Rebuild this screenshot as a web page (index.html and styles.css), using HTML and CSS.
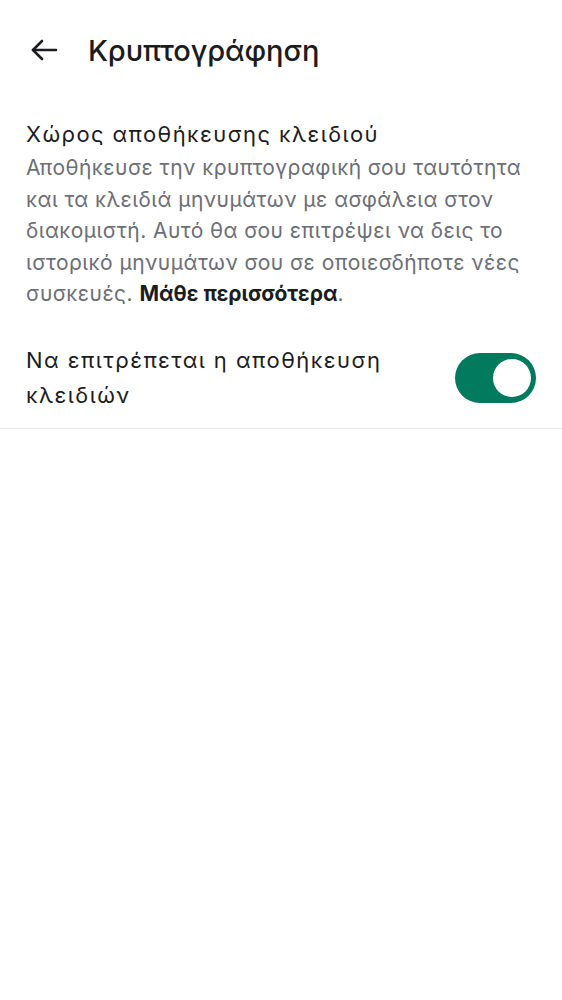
FILE: index.html
```html
<!DOCTYPE html>
<html lang="el">
<head>
<meta charset="utf-8">
<link rel="stylesheet" href="styles.css">
</head>
<body>
<header class="topbar">
  <svg class="back" width="30" height="24" viewBox="0 0 30 24" fill="none" stroke="#1c1d21" stroke-width="2.6" stroke-linecap="round" stroke-linejoin="round">
    <path d="M4 12 H27"/>
    <path d="M13 3 L4 12 L13 21"/>
  </svg>
  <h1 class="title">Κρυπτογράφηση</h1>
</header>
<section class="section">
  <h2 class="sec-title">Χώρος αποθήκευσης κλειδιού</h2>
  <p class="sec-desc">Αποθήκευσε την κρυπτογραφική σου ταυτότητα και τα κλειδιά μηνυμάτων με ασφάλεια στον διακομιστή. Αυτό θα σου επιτρέψει να δεις το ιστορικό μηνυμάτων σου σε οποιεσδήποτε νέες συσκευές. <strong>Μάθε περισσότερα</strong>.</p>
</section>
<div class="row">
  <span class="row-label">Να επιτρέπεται η αποθήκευση κλειδιών</span>
  <span class="toggle"><span class="thumb"></span></span>
</div>
</body>
</html>
```
FILE: styles.css
```css
html, body {
  margin: 0;
  padding: 0;
  background: #ffffff;
}
body {
  font-family: Inter, "Noto Sans", sans-serif;
  color: #1b1c20;
}
.topbar {
  display: flex;
  align-items: center;
  height: 100px;
  padding: 0 0 0 29px;
  box-sizing: border-box;
}
.back {
  display: block;
}
.title {
  margin: 0 0 0 29px;
  font-weight: 500;
  font-size: 29px;
  letter-spacing: -0.1px;
  color: #1b1c20;
}
.section {
  padding: 17px 26px 0 26px;
}
.sec-title {
  margin: 0 0 1px 0;
  font-weight: 400;
  font-size: 22px;
  line-height: 34px;
  letter-spacing: 1.4px;
  color: #1b1c20;
}
.sec-desc {
  margin: 0;
  font-size: 21px;
  line-height: 31.5px;
  letter-spacing: 0.45px;
  color: #6b6e76;
}
.sec-desc strong {
  color: #1b1c20;
  font-weight: 700;
  letter-spacing: 0;
}
.row {
  display: flex;
  align-items: center;
  justify-content: space-between;
  gap: 24px;
  padding: 33px 26px 15px 26px;
  border-bottom: 1px solid #e6e6ea;
}
.row-label {
  font-size: 22px;
  line-height: 35px;
  letter-spacing: 1.45px;
  max-width: 400px;
  color: #1b1c20;
}
.toggle {
  flex: none;
  display: flex;
  align-items: center;
  justify-content: flex-end;
  width: 81px;
  height: 50px;
  padding: 0 5px;
  box-sizing: border-box;
  border-radius: 25px;
  background: #017a5e;
}
.thumb {
  width: 38px;
  height: 38px;
  border-radius: 50%;
  background: #ffffff;
}
```
